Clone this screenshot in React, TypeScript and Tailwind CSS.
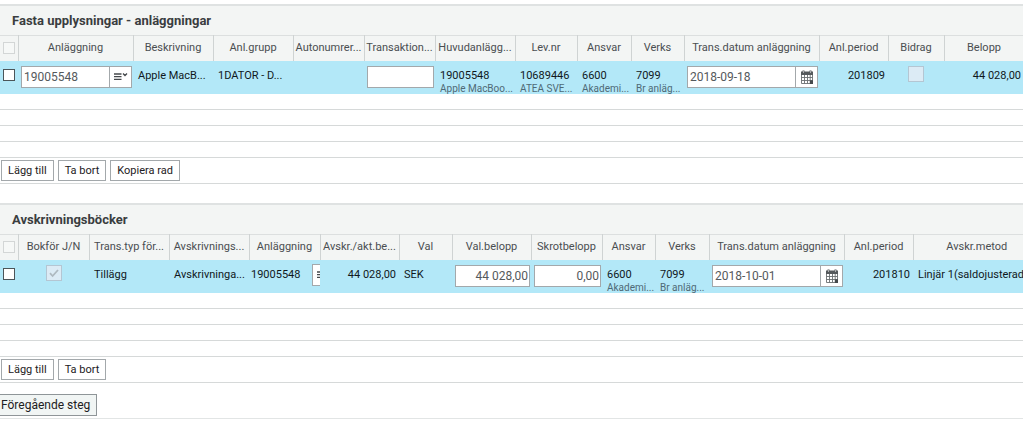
import React from "react";

type Align = "left" | "right" | "center";

interface Column {
  title: string;
  width?: string;
  cell: React.ReactNode;
}

const lineInput =
  "h-[22px] min-w-0 border border-[#a3a8ab] bg-white text-xs text-[#55595c] outline-none";

function Value({ text, sub, align = "left" }: { text: string; sub?: string; align?: Align }) {
  return (
    <div className={align === "right" ? "pt-[7px] pr-[3px] text-right" : "pt-[7px] pl-[5px]"}>
      <div className="h-4 leading-4">{text}</div>
      {sub && <div className="h-[10px] text-[10px] leading-[10px] text-[#4f6a76]">{sub}</div>}
    </div>
  );
}

function MenuIcon() {
  return (
    <svg viewBox="0 0 14 10" className="h-[10px] w-[14px] shrink-0" fill="none" stroke="#45494c">
      <path d="M0 2h7.5M0 4.7h7.5M0 7.4h7.5" strokeWidth="1.3" />
      <path d="M9 1.5l2 2 2-2" strokeWidth="1.3" />
    </svg>
  );
}

function CalendarIcon() {
  return (
    <svg viewBox="0 0 14 14" className="size-[14px] shrink-0">
      <path fill="#55595c" d="M1 1.5h1.5V.5h2v1h5v-1h2v1H13V5H1z" />
      <path fill="#fff" d="M3.2 1.2h.7v1.6h-.7zM10.1 1.2h.7v1.6h-.7z" />
      <path
        fill="none"
        stroke="#6a6e71"
        strokeWidth="0.9"
        d="M1.5 5v8.5h11V5M4.5 5v8.5M7.5 5v8.5M10.2 5v8.5M1.5 7.5h11M1.5 10.5h11"
      />
      <path fill="#45494c" d="M10 10.3h3V14h-3z" />
    </svg>
  );
}

function DateField({ value, label }: { value: string; label: string }) {
  return (
    <div className="flex pt-[5px] pr-px pl-[3px]">
      <input aria-label={label} defaultValue={value} className={`${lineInput} flex-1 pl-[2px]`} />
      <button
        type="button"
        aria-label="Kalender"
        className="flex h-[22px] w-[22px] items-center justify-center border border-l-0 border-[#a3a8ab] bg-white"
      >
        <CalendarIcon />
      </button>
    </div>
  );
}

function TextField({ value, label }: { value: string; label: string }) {
  return (
    <div className="flex pt-[5px] pr-px pl-[3px]">
      <input aria-label={label} defaultValue={value} className={`${lineInput} w-full pr-px text-right`} />
    </div>
  );
}

function DisabledCheck({ label, checked = false }: { label: string; checked?: boolean }) {
  return (
    <div className="flex justify-center pt-[5px]">
      <div className="relative size-4">
        <input
          type="checkbox"
          aria-label={label}
          disabled
          defaultChecked={checked}
          className="block size-4 appearance-none border border-[#b4c6d3] bg-[#dcebf5]"
        />
        {checked && (
          <svg viewBox="0 0 16 16" className="absolute inset-0 size-4" fill="none" stroke="#aeb9c0" strokeWidth="1.8">
            <path d="M4 8.2l2.6 2.8L12 5" />
          </svg>
        )}
      </div>
    </div>
  );
}

function Section({
  title,
  columns,
  actions,
}: {
  title: string;
  columns: Column[];
  actions: string[];
}) {
  return (
    <section className="overflow-hidden border-t-2 border-[#dfe2e2]">
      <h2 className="h-[29px] bg-[#f3f5f4] pl-3 text-[13px] leading-[29px] font-bold text-[#3a3d3f]">{title}</h2>
      <table className="w-full min-w-[1040px] table-fixed border-collapse">
        <thead>
          <tr className="h-[25px] border-t border-[#dcdfdf] bg-[#f3f5f4]">
            <th className="w-[18px] p-0">
              <input
                type="checkbox"
                aria-label="Markera alla"
                disabled
                className="ml-[3px] block size-3 appearance-none border border-[#d3d6d6] bg-[#f6f8f7]"
              />
            </th>
            {columns.map((c) => (
              <th
                key={c.title}
                className={`${c.width ?? ""} border-l border-[#cfd3d3] p-0 text-[11px] font-normal whitespace-nowrap text-[#4a4e51]`}
              >
                {c.title}
              </th>
            ))}
          </tr>
        </thead>
        <tbody>
          <tr className="h-[33px] bg-[#b3e8f8] align-top text-[11px] text-[#10181c]">
            <td className="p-0 pt-2">
              <input
                type="checkbox"
                aria-label="Markera rad"
                className="ml-[3px] block size-3 appearance-none border border-[#4c5559] bg-white"
              />
            </td>
            {columns.map((c) => (
              <td key={c.title} className="overflow-hidden p-0 whitespace-nowrap">
                {c.cell}
              </td>
            ))}
          </tr>
          {[1, 2, 3, 4].map((n) => (
            <tr key={n} className="h-4 border-b border-[#d6d9d9]">
              <td colSpan={columns.length + 1} className="p-0" />
            </tr>
          ))}
        </tbody>
      </table>
      <div className="flex gap-1 border-b border-[#d6d9d9] px-px py-[2px]">
        {actions.map((a) => (
          <button
            key={a}
            type="button"
            className="h-[21px] border border-[#a3a8ab] bg-white px-[6px] text-[11px] leading-[19px] text-[#1d2022]"
          >
            {a}
          </button>
        ))}
      </div>
    </section>
  );
}

const assets: Column[] = [
  {
    title: "Anläggning",
    width: "w-[115px]",
    cell: (
      <div className="flex pt-[5px] pr-px pl-[3px]">
        <input aria-label="Anläggning" defaultValue="19005548" className={`${lineInput} flex-1 pl-[2px]`} />
        <button
          type="button"
          aria-label="Välj anläggning"
          className="flex h-[22px] w-[22px] items-center justify-center border border-l-0 border-[#a3a8ab] bg-white"
        >
          <MenuIcon />
        </button>
      </div>
    ),
  },
  { title: "Beskrivning", width: "w-[80px]", cell: <Value text="Apple MacB..." /> },
  { title: "Anl.grupp", width: "w-[80px]", cell: <Value text="1DATOR - D..." /> },
  { title: "Autonumrer...", width: "w-[71px]", cell: null },
  { title: "Transaktion...", width: "w-[71px]", cell: <TextField label="Transaktion" value="" /> },
  { title: "Huvudanlägg...", width: "w-[80px]", cell: <Value text="19005548" sub="Apple MacBoo..." /> },
  { title: "Lev.nr", width: "w-[62px]", cell: <Value text="10689446" sub="ATEA SVE..." /> },
  { title: "Ansvar", width: "w-[54px]", cell: <Value text="6600" sub="Akademi..." /> },
  { title: "Verks", width: "w-[53px]", cell: <Value text="7099" sub="Br anläg..." /> },
  {
    title: "Trans.datum anläggning",
    width: "w-[135px]",
    cell: <DateField label="Trans.datum anläggning" value="2018-09-18" />,
  },
  { title: "Anl.period", width: "w-[69px]", cell: <Value align="right" text="201809" /> },
  { title: "Bidrag", width: "w-[56px]", cell: <DisabledCheck label="Bidrag" /> },
  { title: "Belopp", width: "w-[80px]", cell: <Value align="right" text="44 028,00" /> },
  { title: "", cell: null },
];

const books: Column[] = [
  { title: "Bokför J/N", width: "w-[71px]", cell: <DisabledCheck label="Bokför" checked /> },
  { title: "Trans.typ för...", width: "w-[80px]", cell: <Value text="Tillägg" /> },
  { title: "Avskrivnings...", width: "w-[80px]", cell: <Value text="Avskrivninga..." /> },
  {
    title: "Anläggning",
    width: "w-[71px]",
    cell: (
      <div className="flex justify-between">
        <div className="pt-[7px] pl-[2px] leading-4">19005548</div>
        <button
          type="button"
          aria-label="Välj anläggning"
          className="mt-1 flex h-[22px] w-2 items-center overflow-hidden border border-r-0 border-[#a3a8ab] bg-white pl-1"
        >
          <MenuIcon />
        </button>
      </div>
    ),
  },
  { title: "Avskr./akt.be...", width: "w-[79px]", cell: <Value align="right" text="44 028,00" /> },
  { title: "Val", width: "w-[53px]", cell: <Value text="SEK" /> },
  { title: "Val.belopp", width: "w-[79px]", cell: <TextField label="Val.belopp" value="44 028,00" /> },
  { title: "Skrotbelopp", width: "w-[71px]", cell: <TextField label="Skrotbelopp" value="0,00" /> },
  { title: "Ansvar", width: "w-[53px]", cell: <Value text="6600" sub="Akademi..." /> },
  { title: "Verks", width: "w-[54px]", cell: <Value text="7099" sub="Br anläg..." /> },
  {
    title: "Trans.datum anläggning",
    width: "w-[135px]",
    cell: <DateField label="Trans.datum anläggning" value="2018-10-01" />,
  },
  { title: "Anl.period", width: "w-[69px]", cell: <Value align="right" text="201810" /> },
  { title: "Avskr.metod", cell: <Value text="Linjär 1(saldojusterad" /> },
];

export default function App() {
  return (
    <main className="overflow-x-hidden bg-white pt-1 font-['Roboto','Liberation_Sans',sans-serif]">
      <div className="flex flex-col gap-[19px]">
        <Section title="Fasta upplysningar - anläggningar" columns={assets} actions={["Lägg till", "Ta bort", "Kopiera rad"]} />
        <Section title="Avskrivningsböcker" columns={books} actions={["Lägg till", "Ta bort"]} />
      </div>
      <div className="flex border-b border-[#e2e5e5] pt-[11px] pb-[2px]">
        <button
          type="button"
          className="h-[22px] border border-l-0 border-[#8f9598] bg-[#f1f5f4] pr-[6px] pl-px text-xs leading-5 text-[#1d2022]"
        >
          Föregående steg
        </button>
      </div>
    </main>
  );
}
